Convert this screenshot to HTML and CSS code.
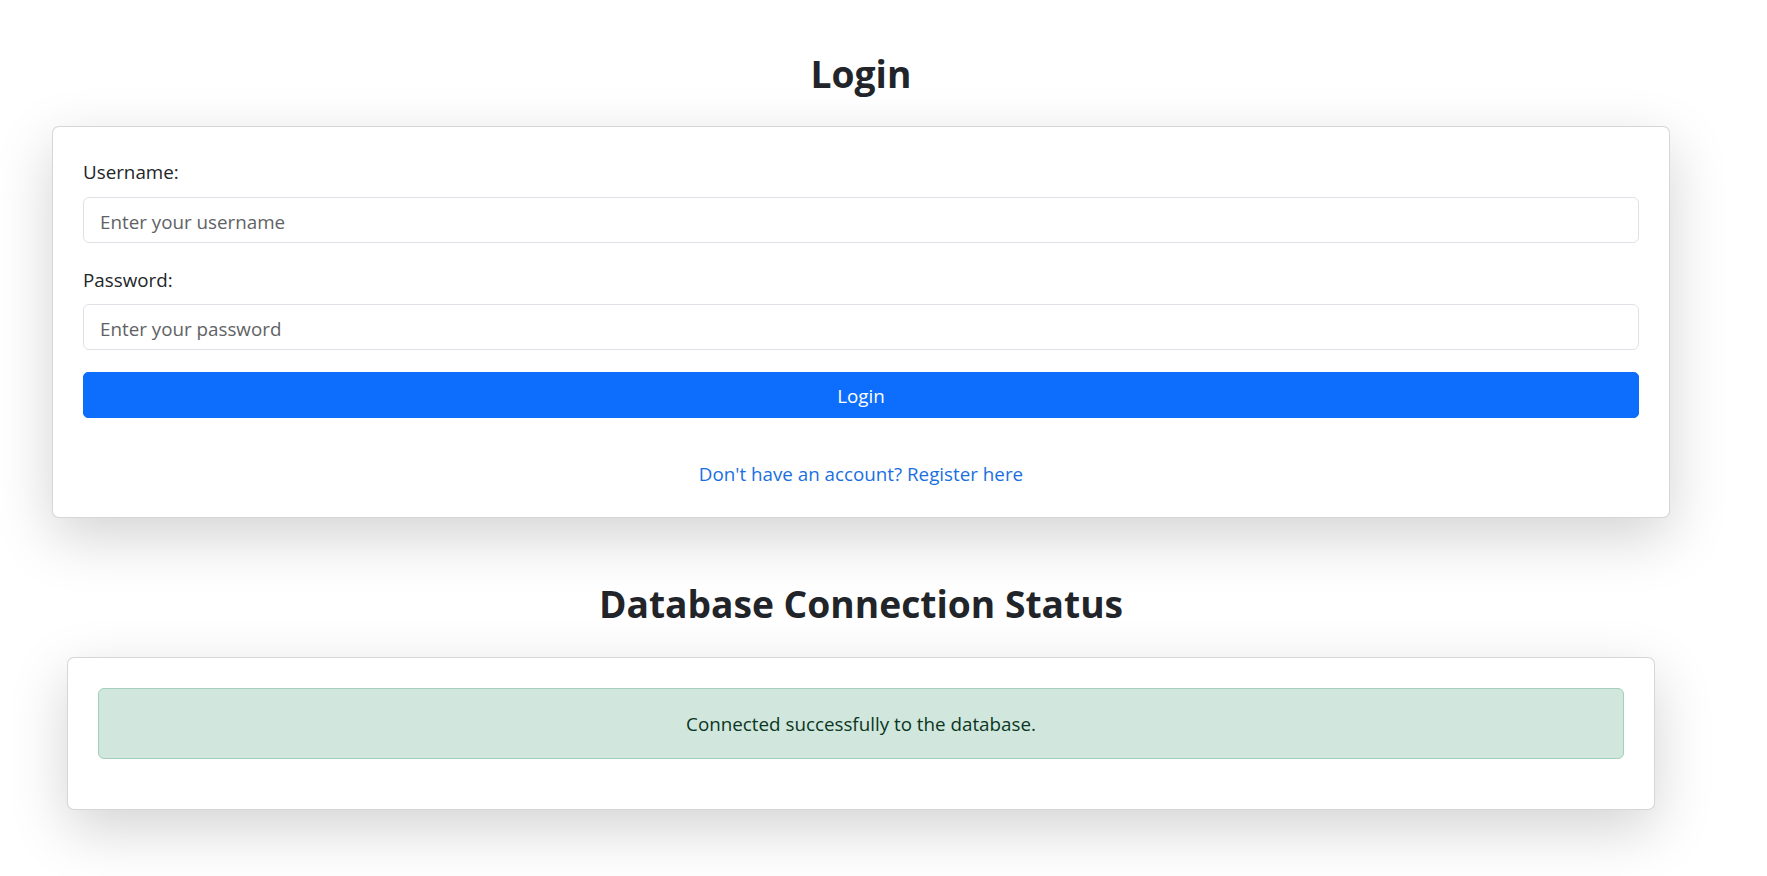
FILE: index.html
```html
<!DOCTYPE html>
<html lang="en">
<head>
<meta charset="utf-8">
<title>Login</title>
<link rel="stylesheet" href="styles.css">
</head>
<body>
<main class="page">
  <section class="section">
    <h2 class="title title-login">Login</h2>
    <div class="card card-login">
      <form class="form">
        <div class="group">
          <label class="label" for="username">Username:</label>
          <input class="input" id="username" type="text" placeholder="Enter your username">
        </div>
        <div class="group">
          <label class="label" for="password">Password:</label>
          <input class="input" id="password" type="password" placeholder="Enter your password">
        </div>
        <button class="btn" type="button">Login</button>
      </form>
      <p class="register"><a class="link" href="#">Don't have an account? Register here</a></p>
    </div>
  </section>
  <section class="section">
    <h2 class="title title-status">Database Connection Status</h2>
    <div class="card card-status">
      <div class="alert">Connected successfully to the database.</div>
    </div>
  </section>
</main>
</body>
</html>
```
FILE: styles.css
```css
* { box-sizing: border-box; }
html, body { margin: 0; padding: 0; background: #fff; }
body {
  font-family: "Open Sans", "Noto Sans", sans-serif;
  font-size: 18.8px;
  line-height: 28.8px;
  color: #212529;
}
.page {
  width: 1618px;
  margin-left: 52px;
  padding-bottom: 66px;
}
.title {
  margin: 0;
  text-align: center;
  font-size: 37.2px;
  line-height: 46px;
  font-weight: 700;
  color: #212529;
}
.title-login { margin-top: 51px; margin-bottom: 29px; }
.title-status { margin-top: 63px; margin-bottom: 30px; }
.card {
  background: #fff;
  border: 1px solid rgba(0, 0, 0, 0.16);
  border-radius: 7px;
  box-shadow: 0 19px 58px rgba(0, 0, 0, 0.175);
}
.card-login { padding: 31px 30px 29px; }
.card-status { margin: 0 15px; padding: 30px 30px 30px; }
.form { display: flex; flex-direction: column; }
.group { display: flex; flex-direction: column; margin-bottom: 22px; }
.group + .group .label { margin-top: 1px; margin-bottom: 9px; }
.label { display: block; margin-bottom: 10px; }
.input {
  height: 46px;
  width: 100%;
  padding: 4px 16px 0;
  font-family: inherit;
  font-size: 18.8px;
  color: #212529;
  background: #fff;
  border: 1px solid #dee2e6;
  border-radius: 6px;
  outline: none;
}
.input::placeholder { color: #5f6265; opacity: 1; }
.btn {
  height: 46px;
  width: 100%;
  padding: 3px 0 1px;
  font-family: inherit;
  font-size: 18.8px;
  line-height: 40px;
  color: #fff;
  background: #0d6efd;
  border: 1px solid #0d6efd;
  border-radius: 5px;
}
.register {
  margin: 42px 0 0;
  text-align: center;
}
.link { color: #1a6fe0; text-decoration: none; }
.alert {
  padding: 21px 16px 19px;
  margin-bottom: 20px;
  text-align: center;
  color: #0a3622;
  background: #d1e7dd;
  border: 1px solid #a3cfbb;
  border-radius: 6px;
}
```
